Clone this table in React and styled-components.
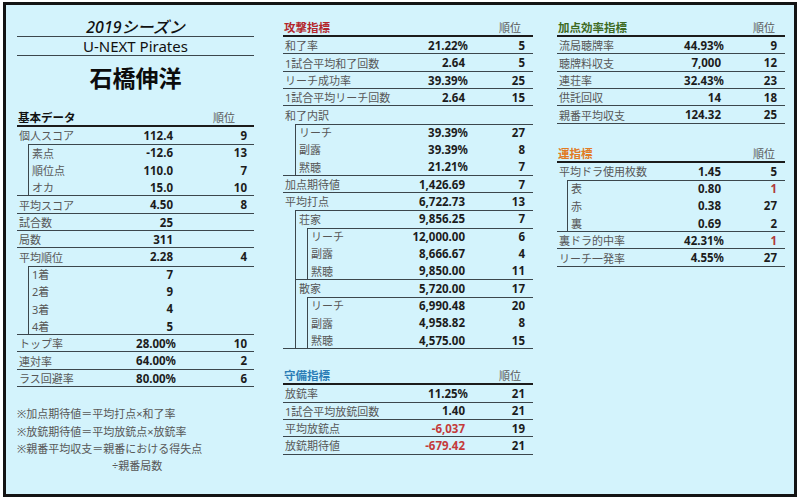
import React from "react";
import styled, { createGlobalStyle } from "styled-components";

const LINE = "#3b464c";
const ROW_H = 17.35;

const GlobalStyle = createGlobalStyle`
  * { box-sizing: border-box; }
  body {
    margin: 0;
    background: #fff;
    font-family: "Noto Sans", "Noto Sans CJK JP", sans-serif;
  }
`;

const Page = styled.div`
  width: 800px;
  height: 499px;
  padding: 2px 3px;
`;
const Board = styled.div`
  width: 794px;
  height: 495px;
  border: 3px solid #141414;
  background: #d3f3fc;
  display: flex;
  align-items: flex-start;
  padding-left: 11px;
`;
const Column = styled.div`
  width: ${(p) => p.$w}px;
  margin-left: ${(p) => p.$ml || 0}px;
  padding-top: ${(p) => p.$pt}px;
  display: flex;
  flex-direction: column;
`;

const Season = styled.div`
  height: 19px;
  padding-top: 1px;
  border-bottom: 1px solid ${LINE};
  text-align: center;
  font-style: italic;
  font-weight: 500;
  font-size: 16px;
  line-height: 17px;
  color: #111;
`;
const Team = styled.div`
  height: 19px;
  border-bottom: 1px solid ${LINE};
  text-align: center;
  font-size: 15px;
  line-height: 18px;
  color: #111;
`;
const Name = styled.div`
  height: 44px;
  margin-bottom: 9px;
  text-align: center;
  font-family: "Noto Sans CJK JP", sans-serif;
  font-weight: 700;
  font-size: 23px;
  line-height: 42px;
  color: #0c0c0c;
`;

const Head = styled.div`
  height: 18px;
  margin-top: ${(p) => p.$mt || 0}px;
  display: flex;
  justify-content: space-between;
  align-items: center;
  border-bottom: 2px solid #1b1b1b;
  font-size: 11px;
`;
const HeadTitle = styled.span`
  font-weight: 700;
  font-size: 11.5px;
  color: ${(p) => p.$color};
  padding-left: 1px;
`;
const HeadRank = styled.span`
  color: #5a5a5a;
  padding-right: ${(p) => p.$pr}px;
`;

const Block = styled.div`
  display: flex;
  flex-direction: column;
  ${(p) => p.$line && `box-shadow: inset 0 -1px 0 ${LINE};`}
`;
const Group = styled.div`
  margin-left: ${(p) => p.$indent}px;
  display: flex;
  flex-direction: column;
  box-shadow: inset 1px 1px 0 ${LINE};
`;
const Row = styled.div`
  height: ${ROW_H}px;
  display: grid;
  grid-template-columns: minmax(0, 1fr) ${(p) => p.$vw}px ${(p) => p.$rw}px;
  align-items: center;
  padding: 0 ${(p) => p.$pr}px 0 ${(p) => (p.$nested ? 4 : 2)}px;
  font-size: 11px;
  line-height: 1;
  ${(p) => p.$line && `box-shadow: inset 0 -1px 0 ${LINE};`}
`;
const Label = styled.span`
  color: #575757;
  white-space: nowrap;
`;
const Value = styled.span`
  text-align: right;
  font-weight: 700;
  font-size: 11.5px;
  color: ${(p) => (p.$red ? "#c43a3a" : "#1c1c1c")};
  padding-right: ${(p) => (p.$pct ? 0 : 3)}px;
  white-space: nowrap;
`;
const Rank = styled.span`
  text-align: right;
  font-weight: 700;
  font-size: 11.5px;
  color: ${(p) => (p.$red ? "#b03a3a" : "#1c1c1c")};
`;

const Notes = styled.div`
  margin-top: 18px;
  font-size: 11px;
  line-height: ${ROW_H}px;
  color: #575757;
  white-space: nowrap;
`;
const NoteCont = styled.div`
  padding-left: 95px;
`;

const basic = [
  {
    label: "個人スコア", value: "112.4", rank: "9",
    children: [
      { label: "素点", value: "-12.6", rank: "13" },
      { label: "順位点", value: "110.0", rank: "7" },
      { label: "オカ", value: "15.0", rank: "10" },
    ],
  },
  { label: "平均スコア", value: "4.50", rank: "8" },
  { label: "試合数", value: "25" },
  { label: "局数", value: "311" },
  {
    label: "平均順位", value: "2.28", rank: "4",
    children: [
      { label: "1着", value: "7" },
      { label: "2着", value: "9" },
      { label: "3着", value: "4" },
      { label: "4着", value: "5" },
    ],
  },
  { label: "トップ率", value: "28.00%", rank: "10" },
  { label: "連対率", value: "64.00%", rank: "2" },
  { label: "ラス回避率", value: "80.00%", rank: "6" },
];

const attack = [
  { label: "和了率", value: "21.22%", rank: "5" },
  { label: "1試合平均和了回数", value: "2.64", rank: "5" },
  { label: "リーチ成功率", value: "39.39%", rank: "25" },
  { label: "1試合平均リーチ回数", value: "2.64", rank: "15" },
  {
    label: "和了内訳",
    children: [
      { label: "リーチ", value: "39.39%", rank: "27" },
      { label: "副露", value: "39.39%", rank: "8" },
      { label: "黙聴", value: "21.21%", rank: "7" },
    ],
  },
  { label: "加点期待値", value: "1,426.69", rank: "7" },
  {
    label: "平均打点", value: "6,722.73", rank: "13",
    children: [
      {
        label: "荘家", value: "9,856.25", rank: "7",
        children: [
          { label: "リーチ", value: "12,000.00", rank: "6" },
          { label: "副露", value: "8,666.67", rank: "4" },
          { label: "黙聴", value: "9,850.00", rank: "11" },
        ],
      },
      {
        label: "散家", value: "5,720.00", rank: "17",
        children: [
          { label: "リーチ", value: "6,990.48", rank: "20" },
          { label: "副露", value: "4,958.82", rank: "8" },
          { label: "黙聴", value: "4,575.00", rank: "15" },
        ],
      },
    ],
  },
];

const defense = [
  { label: "放銃率", value: "11.25%", rank: "21" },
  { label: "1試合平均放銃回数", value: "1.40", rank: "21" },
  { label: "平均放銃点", value: "-6,037", rank: "19", red: true },
  { label: "放銃期待値", value: "-679.42", rank: "21", red: true },
];

const efficiency = [
  { label: "流局聴牌率", value: "44.93%", rank: "9" },
  { label: "聴牌料収支", value: "7,000", rank: "12" },
  { label: "連荘率", value: "32.43%", rank: "23" },
  { label: "供託回収", value: "14", rank: "18" },
  { label: "親番平均収支", value: "124.32", rank: "25" },
];

const luck = [
  {
    label: "平均ドラ使用枚数", value: "1.45", rank: "5",
    children: [
      { label: "表", value: "0.80", rank: "1", redRank: true },
      { label: "赤", value: "0.38", rank: "27" },
      { label: "裏", value: "0.69", rank: "2" },
    ],
  },
  { label: "裏ドラ的中率", value: "42.31%", rank: "1", redRank: true },
  { label: "リーチ一発率", value: "4.55%", rank: "27" },
];

const LEFT = { vw: 70, rw: 71, pr: 7, indent: 11, headPr: 19 };
const MID = { vw: 72, rw: 57, pr: 8, indent: 12, headPr: 12 };
const RIGHT = { vw: 66, rw: 53, pr: 8, indent: 10, headPr: 10 };

const StatRow = ({ item, cols, line, nested }) => {
  const v = item.value || "";
  return (
    <Row $vw={cols.vw} $rw={cols.rw} $pr={cols.pr} $line={line} $nested={nested}>
      <Label>{item.label}</Label>
      <Value $pct={v.endsWith("%")} $red={item.red}>{v}</Value>
      <Rank $red={item.redRank}>{item.rank}</Rank>
    </Row>
  );
};

const Item = ({ item, cols, top, last }) => {
  if (!item.children) {
    return <StatRow item={item} cols={cols} line={top} nested={!top} />;
  }
  return (
    <Block $line={top || !last}>
      <StatRow item={item} cols={cols} nested={!top} />
      <Group $indent={cols.indent}>
        {item.children.map((c, i) => (
          <Item key={i} item={c} cols={cols} last={i === item.children.length - 1} />
        ))}
      </Group>
    </Block>
  );
};

const Section = ({ title, color, items, cols, mt }) => (
  <>
    <Head $mt={mt}>
      <HeadTitle $color={color}>{title}</HeadTitle>
      <HeadRank $pr={cols.headPr}>順位</HeadRank>
    </Head>
    {items.map((it, i) => (
      <Item key={i} item={it} cols={cols} top />
    ))}
  </>
);

export default function App() {
  return (
    <Page>
      <GlobalStyle />
      <Board>
        <Column $w={237} $pt={13}>
          <Season>2019シーズン</Season>
          <Team>U-NEXT Pirates</Team>
          <Name>石橋伸洋</Name>
          <Section title="基本データ" color="#111" items={basic} cols={LEFT} />
          <Notes>
            <div>※加点期待値＝平均打点×和了率</div>
            <div>※放銃期待値＝平均放銃点×放銃率</div>
            <div>※親番平均収支＝親番における得失点</div>
            <NoteCont>÷親番局数</NoteCont>
          </Notes>
        </Column>
        <Column $w={250} $ml={29} $pt={14}>
          <Section title="攻撃指標" color="#b3262c" items={attack} cols={MID} />
          <Section title="守備指標" color="#2b7db6" items={defense} cols={MID} mt={18} />
        </Column>
        <Column $w={228} $ml={24} $pt={14}>
          <Section title="加点効率指標" color="#3e6a22" items={efficiency} cols={RIGHT} />
          <Section title="運指標" color="#e27a22" items={luck} cols={RIGHT} mt={21} />
        </Column>
      </Board>
    </Page>
  );
}
